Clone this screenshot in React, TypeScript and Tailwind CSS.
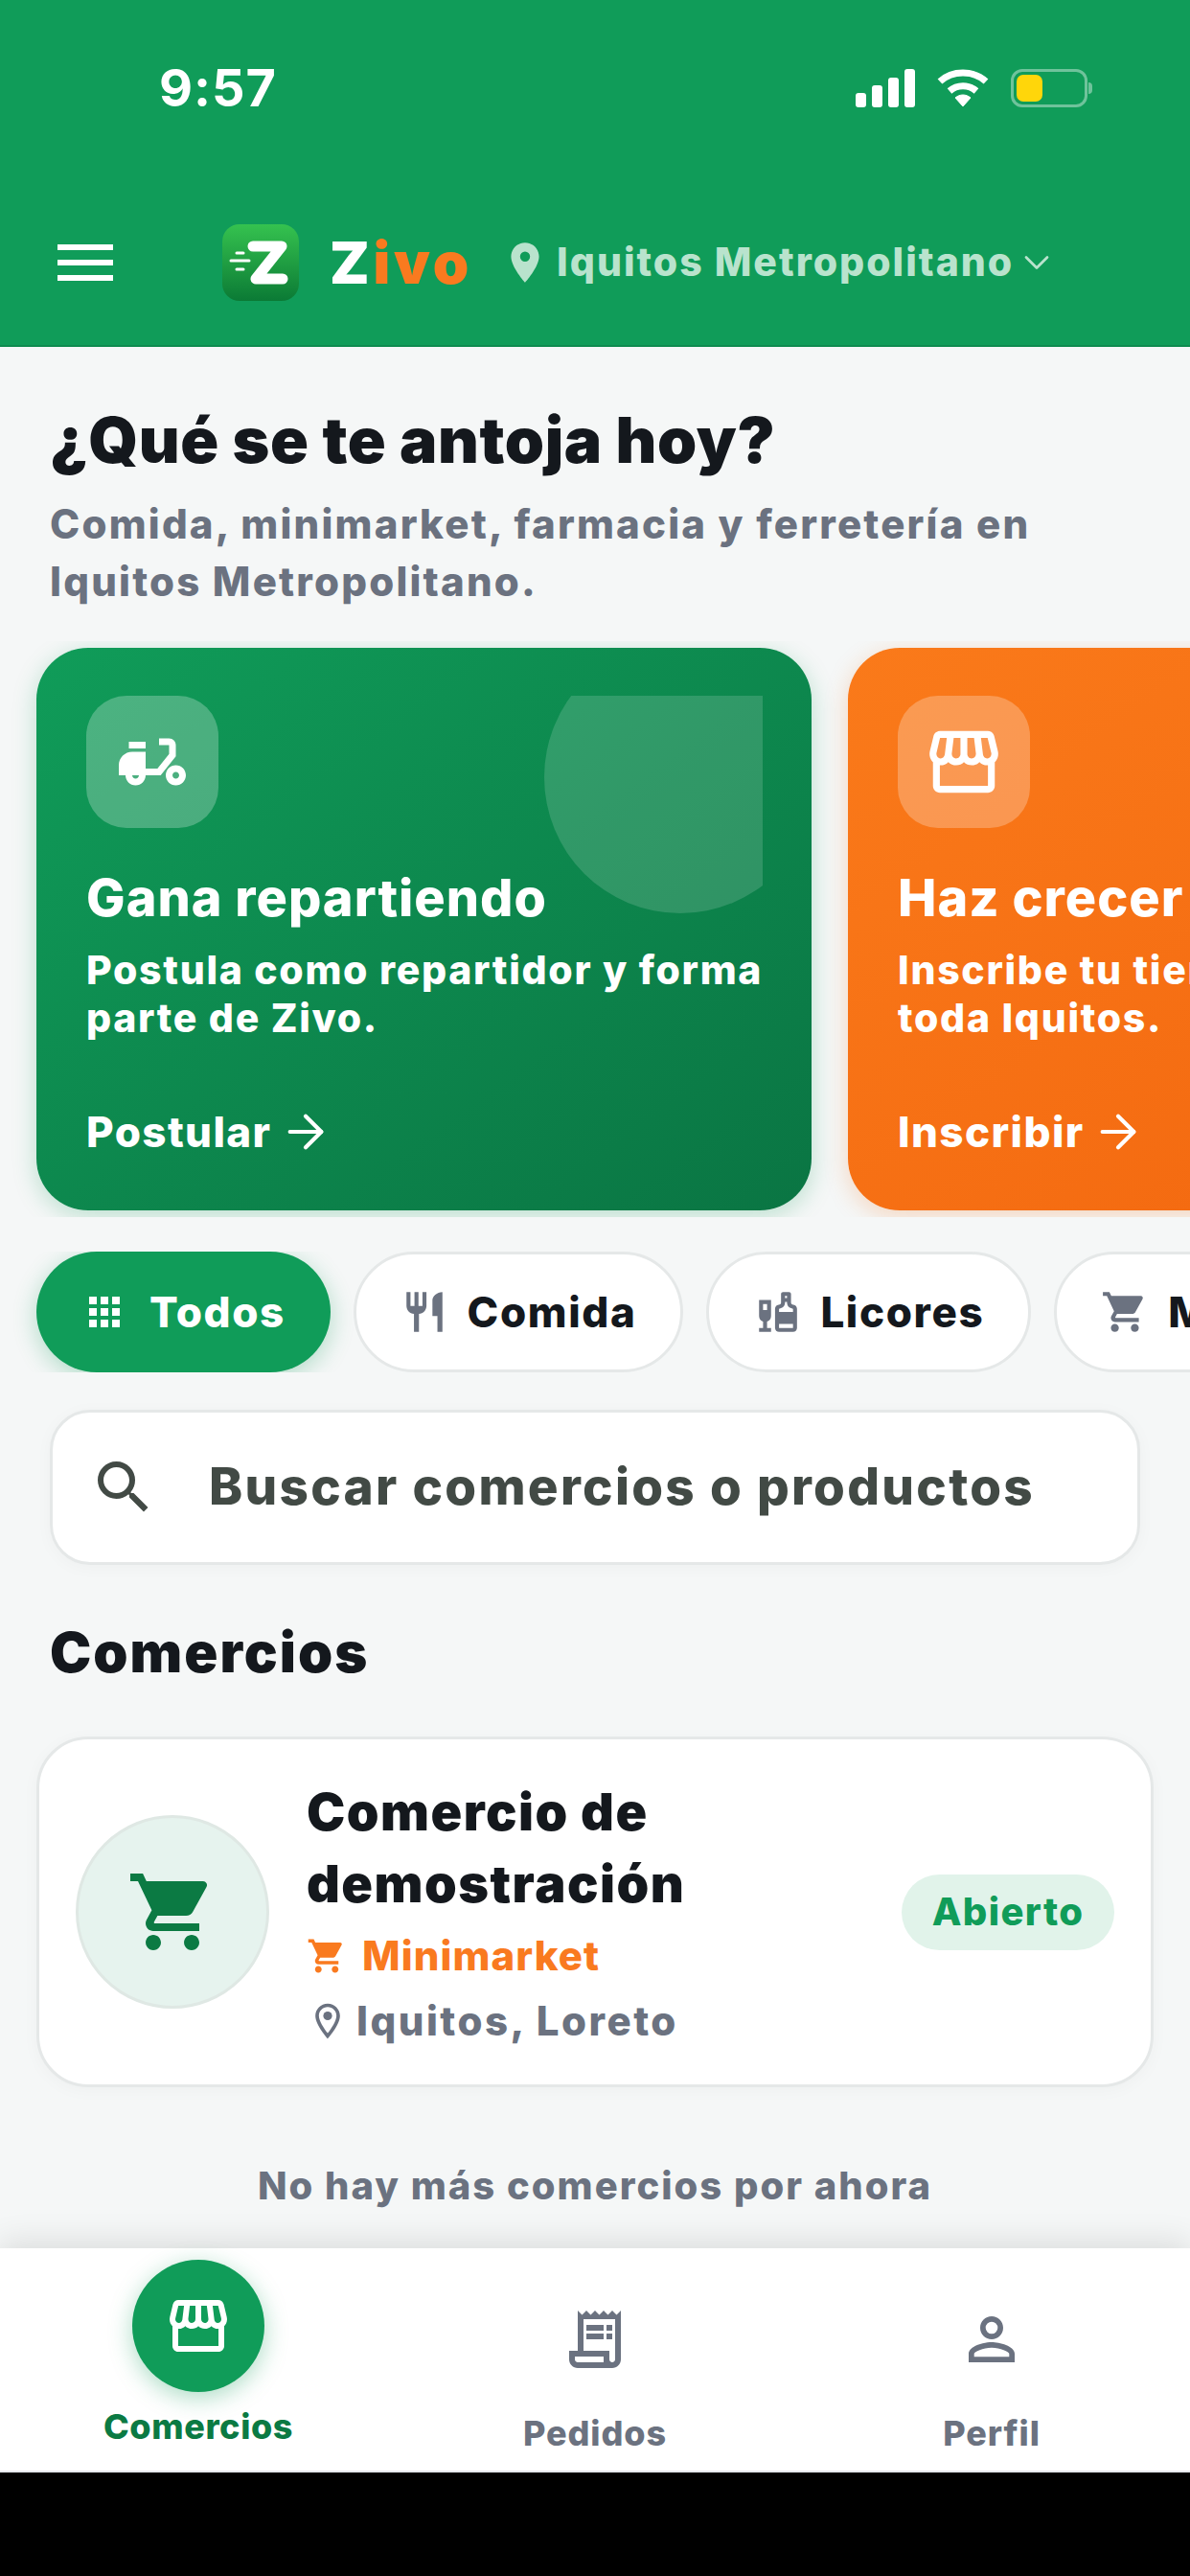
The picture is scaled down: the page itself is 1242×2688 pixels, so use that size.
import { ArrowRight, ChevronDown } from 'lucide-react';
import {
  MdApps,
  MdLiquor,
  MdLocationOn,
  MdMoped,
  MdOutlineLocationOn,
  MdOutlineReceiptLong,
  MdOutlineStorefront,
  MdPersonOutline,
  MdRestaurant,
  MdSearch,
  MdShoppingCart,
} from 'react-icons/md';

function StatusBar() {
  return (
    <div className="flex h-[184px] items-center justify-between pl-[166px] pr-[102px]">
      <span className="text-[54px] font-bold leading-none tracking-[1px] text-white">9:57</span>
      <div className="flex items-center gap-[23px]">
        <svg width="62" height="40" viewBox="0 0 62 40" fill="white">
          <rect x="0" y="25" width="11" height="15" rx="3" />
          <rect x="17" y="17" width="11" height="23" rx="3" />
          <rect x="34" y="9" width="11" height="31" rx="3" />
          <rect x="51" y="0" width="11" height="40" rx="3" />
        </svg>
        <svg width="54" height="40" viewBox="0 0 54 40" fill="none" stroke="white">
          <path d="M3 13 C16 1 38 1 51 13" strokeWidth="7" />
          <path d="M13 23 C21 16 33 16 41 23" strokeWidth="7" />
          <path d="M19 30 L27 39 L35 30 C30 26 24 26 19 30 Z" fill="white" strokeWidth="1" />
        </svg>
        <div className="flex items-center">
          <div className="flex h-[40px] w-[80px] items-center rounded-[12px] border-[3px] border-white/40 p-[3px]">
            <div className="h-full w-[27px] rounded-[7px] bg-[#ffd60a]" />
          </div>
          <div className="ml-[1px] h-[12px] w-[4px] rounded-r-full bg-white/40" />
        </div>
      </div>
    </div>
  );
}

function ZivoLogo() {
  return (
    <svg width="80" height="80" viewBox="0 0 80 80">
      <defs>
        <linearGradient id="zivo-bg" x1="0" y1="0" x2="0" y2="1">
          <stop offset="0" stopColor="#35c24f" />
          <stop offset="1" stopColor="#0b7a35" />
        </linearGradient>
      </defs>
      <rect width="80" height="80" rx="18" fill="url(#zivo-bg)" />
      <path d="M32 23 H62 L35 57 H63" fill="none" stroke="white" strokeWidth="11" strokeLinecap="round" strokeLinejoin="round" />
      <path d="M15 30 H22 M9 38 H28 M15 47 H22" fill="none" stroke="white" strokeWidth="3" strokeLinecap="round" />
    </svg>
  );
}

function Header() {
  return (
    <header className="h-[362px] shrink-0 border-b-[2px] border-[#0e8a4f] bg-[#109c59]">
      <StatusBar />
      <div className="mt-[45px] flex h-[90px] items-center pl-[60px]">
        <div className="flex w-[58px] flex-col gap-[10px]">
          <div className="h-[6px] bg-white" />
          <div className="h-[6px] bg-white" />
          <div className="h-[6px] bg-white" />
        </div>
        <div className="ml-[114px]">
          <ZivoLogo />
        </div>
        <span className="ml-[32px] text-[60px] font-black leading-none tracking-[3.8px] text-white">
          Z<span className="text-[#f97a1f]">ivo</span>
        </span>
        <MdLocationOn className="ml-[30px] text-[#b9e3cd]" size={50} />
        <span className="ml-[8px] text-[41px] font-extrabold tracking-[2px] text-[#b9e3cd]">Iquitos Metropolitano</span>
        <ChevronDown className="ml-[2px] text-[#b9e3cd]" size={44} strokeWidth={1.5} />
      </div>
    </header>
  );
}

interface PromoProps {
  tone: 'green' | 'orange';
  title: string;
  lines: string[];
  cta: string;
}

function PromoCard({ tone, title, lines, cta }: PromoProps) {
  const green = tone === 'green';
  return (
    <div
      className={
        green
          ? 'relative h-[587px] w-[809px] shrink-0 rounded-[54px] bg-gradient-to-br from-[#109c59] to-[#0a7543] shadow-[0_6px_24px_rgba(16,156,89,0.25)]'
          : 'relative h-[587px] w-[809px] shrink-0 rounded-[54px] bg-gradient-to-br from-[#fa7a1a] to-[#f2650d] shadow-[0_6px_24px_rgba(249,115,22,0.25)]'
      }
    >
      {green && (
        <div className="absolute left-[52px] right-[51px] top-[50px] h-[240px] overflow-hidden">
          <div className="absolute left-[478px] top-[-57px] h-[284px] w-[284px] rounded-full bg-white/15" />
        </div>
      )}
      <div className="relative flex h-full flex-col px-[52px] pt-[50px]">
        <div className="flex h-[138px] w-[138px] items-center justify-center rounded-[42px] bg-white/25 text-white">
          {green ? <MdMoped size={84} /> : <MdOutlineStorefront size={86} />}
        </div>
        <h3 className="mt-[40px] whitespace-nowrap text-[54px] font-extrabold leading-[66px] tracking-[1px] text-white">{title}</h3>
        <p className="mt-[17px] whitespace-nowrap text-[41px] font-extrabold leading-[50px] tracking-[1.7px] text-white">
          {lines[0]}
          <br />
          {lines[1]}
        </p>
        <div className="mt-[66px] flex items-center gap-[7px] text-white">
          <span className="text-[44px] font-extrabold leading-[50px] tracking-[1.4px]">{cta}</span>
          <ArrowRight size={56} strokeWidth={1.8} />
        </div>
      </div>
    </div>
  );
}

interface ChipProps {
  label: string;
  icon: React.ReactNode;
  active?: boolean;
}

function Chip({ label, icon, active }: ChipProps) {
  return (
    <div
      className={
        active
          ? 'flex h-[126px] shrink-0 items-center gap-[23px] rounded-full bg-[#109c59] px-[47px] text-[#fff] shadow-[0_6px_24px_rgba(16,156,89,0.3)]'
          : 'flex h-[126px] shrink-0 items-center gap-[20px] rounded-full border-[3px] border-[#e5e8e8] bg-white px-[46px] text-[#6b7280]'
      }
    >
      {icon}
      <span className={active ? 'text-[44px] font-extrabold tracking-[1.5px]' : 'text-[44px] font-extrabold tracking-[1.6px] text-[#14181d]'}>
        {label}
      </span>
    </div>
  );
}

function NavItem({ label, icon }: { label: string; icon: React.ReactNode }) {
  return (
    <div className="flex flex-col items-center pt-[59px]">
      <div className="text-[#6b7280]">{icon}</div>
      <span className="mt-[40px] text-[36px] font-extrabold leading-[44px] tracking-[0.9px] text-[#6b7280]">{label}</span>
    </div>
  );
}

export default function App() {
  return (
    <div className="flex h-[2688px] w-[1242px] flex-col overflow-hidden bg-black font-['Inter',sans-serif]">
      <Header />
      <main className="h-[1984px] shrink-0 overflow-hidden bg-[#f5f7f7]">
        <div className="px-[52px] pt-[53px]">
          <h1 className="text-[66px] font-black leading-[88px] tracking-[0.6px] text-[#14181d]">¿Qué se te antoja hoy?</h1>
          <p className="mt-[14px] text-[42px] font-extrabold leading-[60px] tracking-[2.2px] text-[#6b7280]">
            Comida, minimarket, farmacia y ferretería en
            <br />
            Iquitos Metropolitano.
          </p>
        </div>

        <div className="mt-[32px] flex gap-[38px] overflow-hidden px-[38px] py-[7px]">
          <PromoCard tone="green" title="Gana repartiendo" lines={['Postula como repartidor y forma', 'parte de Zivo.']} cta="Postular" />
          <PromoCard tone="orange" title="Haz crecer tu negocio" lines={['Inscribe tu tienda y vende en', 'toda Iquitos.']} cta="Inscribir" />
        </div>

        <div className="mt-[36px] flex gap-[24px] overflow-hidden px-[38px]">
          <Chip active label="Todos" icon={<MdApps size={48} />} />
          <Chip label="Comida" icon={<MdRestaurant size={50} />} />
          <Chip label="Licores" icon={<MdLiquor size={50} />} />
          <Chip label="Minimarket" icon={<MdShoppingCart size={50} />} />
        </div>

        <div className="mx-[52px] mt-[39px] flex h-[162px] items-center rounded-[42px] border-[3px] border-[#e5e8e8] bg-white pl-[38px] shadow-[0_3px_18px_rgba(0,0,0,0.03)]">
          <MdSearch className="text-[#424a45]" size={72} />
          <span className="ml-[53px] text-[53px] font-extrabold tracking-[2.3px] text-[#424a45]">Buscar comercios o productos</span>
        </div>

        <h2 className="mx-[52px] mt-[55px] text-[58px] font-black leading-[72px] tracking-[2px] text-[#14181d]">Comercios</h2>

        <div className="mx-[38px] mt-[52px] flex h-[366px] items-center rounded-[54px] border-[3px] border-[#e5e8e8] bg-white pl-[38px] pr-[38px] shadow-[0_3px_18px_rgba(0,0,0,0.03)]">
          <div className="flex h-[202px] w-[202px] shrink-0 items-center justify-center rounded-full border-[3px] border-[#dfe8e4] bg-[#e6f3ee] text-[#0b7a43]">
            <MdShoppingCart size={96} />
          </div>
          <div className="ml-[39px] flex-1">
            <h3 className="text-[54px] font-black leading-[75px] tracking-[1.5px] text-[#14181d]">
              Comercio de
              <br />
              demostración
            </h3>
            <div className="mt-[8px] flex items-center text-[#f97a1f]">
              <MdShoppingCart size={42} />
              <span className="ml-[16px] text-[42px] font-extrabold leading-[60px] tracking-[1.1px]">Minimarket</span>
            </div>
            <div className="mt-[10px] flex items-center text-[#6b7280]">
              <MdOutlineLocationOn size={44} />
              <span className="ml-[8px] text-[42px] font-extrabold leading-[56px] tracking-[2.5px]">Iquitos, Loreto</span>
            </div>
          </div>
          <div className="flex h-[79px] w-[222px] shrink-0 items-center justify-center rounded-full bg-[#e1f3ea] text-[40px] font-extrabold tracking-[1.4px] text-[#109c59]">
            Abierto
          </div>
        </div>

        <p className="mt-[75px] text-center text-[40px] font-extrabold leading-[56px] tracking-[2px] text-[#6b7280]">No hay más comercios por ahora</p>
      </main>

      <nav className="grid h-[234px] shrink-0 grid-cols-3 border-b-[2px] border-[#e5e7eb] bg-white shadow-[0_-8px_30px_rgba(0,0,0,0.1)]">
        <div className="flex flex-col items-center pt-[12px]">
          <div className="flex h-[138px] w-[138px] items-center justify-center rounded-full bg-[#109c59] text-white shadow-[0_6px_24px_rgba(16,156,89,0.35)]">
            <MdOutlineStorefront size={72} />
          </div>
          <span className="mt-[14px] text-[36px] font-extrabold leading-[44px] tracking-[0.6px] text-[#0b7a43]">Comercios</span>
        </div>
        <NavItem label="Pedidos" icon={<MdOutlineReceiptLong size={72} />} />
        <NavItem label="Perfil" icon={<MdPersonOutline size={72} />} />
      </nav>
    </div>
  );
}
